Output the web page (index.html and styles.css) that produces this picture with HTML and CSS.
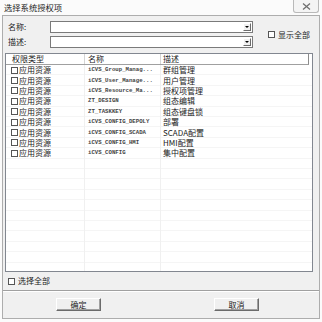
FILE: index.html
```html
<!DOCTYPE html>
<html lang="zh-CN">
<head>
    <meta charset="UTF-8">
    <title>选择系统授权项</title>
    <link rel="stylesheet" href="styles.css">
</head>
<body>
    <div class="window">
        <div class="titlebar">
            <span class="title">选择系统授权项</span>
            <button class="close-btn" type="button">
                <svg width="9" height="7" viewBox="0 0 9 7" fill="none" stroke="#6d6d6d" stroke-width="1.2">
                    <path d="M1 0.5 8 6.5"></path>
                    <path d="M8 0.5 1 6.5"></path>
                </svg>
            </button>
        </div>

        <div class="panel">
            <!-- filter fields -->
            <div class="filters">
                <div class="fields">
                    <div class="field">
                        <span class="field-label">名称:</span>
                        <div class="combo"><span class="combo-arrow"></span></div>
                    </div>
                    <div class="field">
                        <span class="field-label">描述:</span>
                        <div class="combo"><span class="combo-arrow"></span></div>
                    </div>
                </div>
                <label class="check show-all"><span class="check-box"></span>显示全部</label>
            </div>

            <!-- permission list -->
            <div class="list">
                <div class="list-head">
                    <div class="col col-type">权限类型</div>
                    <div class="col col-name">名称</div>
                    <div class="col col-desc">描述</div>
                </div>
                <div class="list-body">
                    <div class="row"><div class="col col-type"><span class="check-box"></span>应用资源</div><div class="col col-name">iCVS_Group_Manag...</div><div class="col col-desc">群组管理</div></div>
                    <div class="row"><div class="col col-type"><span class="check-box"></span>应用资源</div><div class="col col-name">iCVS_User_Manage...</div><div class="col col-desc">用户管理</div></div>
                    <div class="row"><div class="col col-type"><span class="check-box"></span>应用资源</div><div class="col col-name">iCVS_Resource_Ma...</div><div class="col col-desc">授权项管理</div></div>
                    <div class="row"><div class="col col-type"><span class="check-box"></span>应用资源</div><div class="col col-name">ZT_DESIGN</div><div class="col col-desc">组态编辑</div></div>
                    <div class="row"><div class="col col-type"><span class="check-box"></span>应用资源</div><div class="col col-name">ZT_TASKKEY</div><div class="col col-desc">组态键盘锁</div></div>
                    <div class="row"><div class="col col-type"><span class="check-box"></span>应用资源</div><div class="col col-name">iCVS_CONFIG_DEPOLY</div><div class="col col-desc">部署</div></div>
                    <div class="row"><div class="col col-type"><span class="check-box"></span>应用资源</div><div class="col col-name">iCVS_CONFIG_SCADA</div><div class="col col-desc">SCADA配置</div></div>
                    <div class="row"><div class="col col-type"><span class="check-box"></span>应用资源</div><div class="col col-name">iCVS_CONFIG_HMI</div><div class="col col-desc">HMI配置</div></div>
                    <div class="row"><div class="col col-type"><span class="check-box"></span>应用资源</div><div class="col col-name">iCVS_CONFIG</div><div class="col col-desc">集中配置</div></div>
                </div>
            </div>

            <label class="check select-all"><span class="check-box"></span>选择全部</label>

            <div class="separator"></div>

            <div class="actions">
                <button class="btn" type="button">确定</button>
                <button class="btn" type="button">取消</button>
            </div>
        </div>
    </div>
</body>
</html>
```

FILE: styles.css
```css
* {
    box-sizing: border-box;
}

body {
    margin: 0;
    font-family: "Noto Sans CJK SC", "Noto Sans", sans-serif;
    font-size: 8px;
    color: #222;
    background: #ffffff;
}

.window {
    width: 322px;
    height: 322px;
    display: flex;
    flex-direction: column;
    background: #fbfbfb;
}

/* title bar */
.titlebar {
    height: 15px;
    display: flex;
    align-items: flex-start;
    justify-content: space-between;
    padding-left: 4px;
    padding-right: 3px;
}

.title {
    font-size: 8.3px;
    line-height: 15px;
    color: #222;
}

.close-btn {
    width: 26px;
    height: 13px;
    padding: 0;
    display: flex;
    align-items: center;
    justify-content: center;
    background: #f4f4f4;
    border: 1px solid #b9b9b9;
    border-top: none;
    border-radius: 0 0 3px 3px;
}

/* main panel */
.panel {
    flex: 1;
    margin: 0 2px 3px 2px;
    border: 1px solid #adadad;
    background: #f0f0f0;
    display: flex;
    flex-direction: column;
    padding-top: 5px;
}

.filters {
    display: flex;
    align-items: center;
    padding-left: 5px;
}

.fields {
    display: flex;
    flex-direction: column;
    gap: 3px;
}

.field {
    display: flex;
    align-items: center;
}

.field-label {
    width: 42px;
    line-height: 12px;
}

.combo {
    width: 203px;
    height: 12px;
    background: #fff;
    border: 1px solid #7a7a7a;
    position: relative;
}

.combo-arrow {
    position: absolute;
    right: 1px;
    top: 1px;
    width: 8px;
    height: 8px;
    background: #f0f0f0;
    border: 1px solid;
    border-color: #fff #6b6b6b #6b6b6b #fff;
}

.combo-arrow::after {
    content: "";
    position: absolute;
    left: 1px;
    top: 2px;
    border-left: 2px solid transparent;
    border-right: 2px solid transparent;
    border-top: 2px solid #000;
}

.check {
    display: flex;
    align-items: center;
    gap: 2px;
    line-height: 10px;
}

.check-box {
    width: 7px;
    height: 7px;
    flex: none;
    background: #fff;
    border: 1px solid #555;
}

.show-all {
    margin-left: 15px;
    gap: 3px;
}

/* list */
.list {
    margin: 5px 6px 0 2px;
    height: 219px;
    border: 1px solid #828790;
    background: #fff;
    display: flex;
    flex-direction: column;
    overflow: hidden;
}

.list-head {
    display: flex;
    height: 11px;
    width: 303px;
    border-bottom: 1px solid #a0a0a0;
    border-right: 1px solid #8c8c8c;
}

.list-head .col {
    line-height: 10px;
    border-right: 1px solid #d5d5d5;
}

.list-head .col-type {
    padding-left: 6px;
}

.list-head .col-desc {
    border-right: none;
}

.col {
    flex: none;
    white-space: nowrap;
    overflow: hidden;
}

.col-type {
    width: 79px;
}

.col-name {
    width: 76px;
    padding-left: 3px;
}

.col-desc {
    width: 147px;
    padding-left: 2px;
}

.list-body {
    flex: 1;
    background-image:
        linear-gradient(#f0f0f0, #f0f0f0),
        linear-gradient(#f0f0f0, #f0f0f0),
        repeating-linear-gradient(to bottom, transparent 0 9.4px, #f5f5f5 9.4px 10.4px);
    background-size: 1px 100%, 1px 100%, 100% 100%;
    background-position: 78px 0, 154px 0, 0 0;
    background-repeat: no-repeat;
}

.row {
    display: flex;
    height: 10.4px;
    align-items: center;
}

.row .col {
    line-height: 10px;
}

.row .col-type {
    display: flex;
    align-items: center;
    gap: 1px;
    padding-left: 5px;
}

.row .col-name {
    font-family: "Liberation Mono", "DejaVu Sans Mono", monospace;
    font-size: 5.7px;
    font-weight: bold;
    color: #444;
}

.select-all {
    margin: 4px 0 0 5px;
    gap: 3px;
}

.separator {
    margin-top: 4px;
    height: 2px;
    border-top: 1px solid #a0a0a0;
    border-bottom: 1px solid #ffffff;
}

.actions {
    display: flex;
    gap: 113px;
    padding: 6px 0 0 53px;
}

.btn {
    width: 45px;
    height: 13px;
    padding: 0;
    font-family: "Noto Sans CJK SC", sans-serif;
    font-size: 8px;
    line-height: 10px;
    color: #222;
    background: #f0f0f0;
    border: 1px solid;
    border-color: #ffffff #6b6b6b #6b6b6b #ffffff;
    box-shadow: inset -1px -1px 0 #a0a0a0;
}
```
